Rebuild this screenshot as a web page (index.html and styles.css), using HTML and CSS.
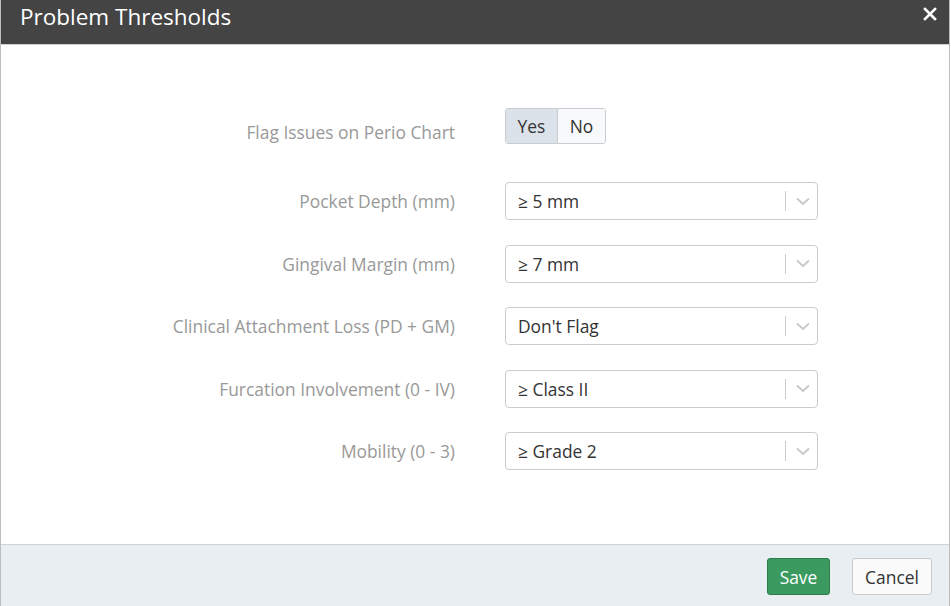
FILE: index.html
```html
<!DOCTYPE html>
<html>
<head>
<meta charset="utf-8">
<link rel="stylesheet" href="styles.css">
</head>
<body>
<div class="modal">
  <div class="modal-header">
    <h1 class="modal-title">Problem Thresholds</h1>
    <button class="close" aria-label="Close">
      <svg width="14" height="14" viewBox="0 0 14 14"><path d="M2 2 L12 12 M12 2 L2 12" stroke="#fff" stroke-width="2.6" stroke-linecap="square"/></svg>
    </button>
  </div>
  <div class="modal-body">
    <div class="row row-toggle">
      <label class="label">Flag Issues on Perio Chart</label>
      <div class="toggle">
        <span class="tbtn active">Yes</span><span class="tbtn">No</span>
      </div>
    </div>
    <div class="row">
      <label class="label">Pocket Depth (mm)</label>
      <div class="select"><span class="value">≥ 5 mm</span><span class="sep"></span><svg class="chev" width="14" height="9" viewBox="0 0 14 9"><path d="M1 1.5 L7 7 L13 1.5" fill="none" stroke="#c8c8c8" stroke-width="1.8"/></svg></div>
    </div>
    <div class="row">
      <label class="label">Gingival Margin (mm)</label>
      <div class="select"><span class="value">≥ 7 mm</span><span class="sep"></span><svg class="chev" width="14" height="9" viewBox="0 0 14 9"><path d="M1 1.5 L7 7 L13 1.5" fill="none" stroke="#c8c8c8" stroke-width="1.8"/></svg></div>
    </div>
    <div class="row">
      <label class="label">Clinical Attachment Loss (PD + GM)</label>
      <div class="select"><span class="value">Don't Flag</span><span class="sep"></span><svg class="chev" width="14" height="9" viewBox="0 0 14 9"><path d="M1 1.5 L7 7 L13 1.5" fill="none" stroke="#c8c8c8" stroke-width="1.8"/></svg></div>
    </div>
    <div class="row">
      <label class="label">Furcation Involvement (0 - IV)</label>
      <div class="select"><span class="value">≥ Class II</span><span class="sep"></span><svg class="chev" width="14" height="9" viewBox="0 0 14 9"><path d="M1 1.5 L7 7 L13 1.5" fill="none" stroke="#c8c8c8" stroke-width="1.8"/></svg></div>
    </div>
    <div class="row">
      <label class="label">Mobility (0 - 3)</label>
      <div class="select"><span class="value">≥ Grade 2</span><span class="sep"></span><svg class="chev" width="14" height="9" viewBox="0 0 14 9"><path d="M1 1.5 L7 7 L13 1.5" fill="none" stroke="#c8c8c8" stroke-width="1.8"/></svg></div>
    </div>
  </div>
  <div class="modal-footer">
    <button class="btn btn-save">Save</button>
    <button class="btn btn-cancel">Cancel</button>
  </div>
</div>
</body>
</html>
```

FILE: styles.css
```css
html, body {
  margin: 0;
  padding: 0;
  background: #fff;
  font-family: "Open Sans", "Liberation Sans", sans-serif;
}
.modal {
  width: 950px;
  height: 606px;
  box-sizing: border-box;
  border-left: 1px solid #bdbdbd;
  border-right: 1px solid #bdbdbd;
  display: flex;
  flex-direction: column;
}
.modal-header {
  height: 45px;
  box-sizing: border-box;
  flex: none;
  background: #444444;
  border-bottom: 1px solid #d0d0d0;
  display: flex;
  align-items: center;
  justify-content: space-between;
  padding: 0 12px 0 19px;
}
.modal-title {
  margin: 0;
  color: #fff;
  font-size: 22.5px;
  font-weight: 400;
  line-height: 1;
  margin-top: -9px;
}
.close {
  background: none;
  border: none;
  padding: 0;
  margin-top: -16px;
  display: flex;
}
.modal-body {
  flex: 1;
  padding-top: 63px;
  display: flex;
  flex-direction: column;
  gap: 24.5px;
}
.row {
  display: flex;
  align-items: center;
  height: 38px;
}
.row-toggle {
  height: 36px;
  margin-bottom: 13.5px;
}
.row-toggle .label {
  padding-top: 12px;
}
.label {
  width: 454px;
  text-align: right;
  color: #999;
  font-size: 17.4px;
  margin-right: 50px;
}
.toggle {
  display: flex;
  height: 36px;
  border: 1px solid #c9cdd1;
  border-radius: 3px;
  box-sizing: border-box;
  overflow: hidden;
}
.tbtn {
  display: flex;
  align-items: center;
  justify-content: center;
  font-size: 17.4px;
  color: #333;
  background: #f7f9fb;
  width: 47px;
}
.tbtn.active {
  background: #dbe2e9;
  border-right: 1px solid #c9cdd1;
  width: 51px;
}
.select {
  width: 313px;
  height: 38px;
  box-sizing: border-box;
  border: 1px solid #ccc;
  border-radius: 4px;
  display: flex;
  align-items: center;
  padding-left: 12px;
  padding-right: 7px;
}
.value {
  flex: 1;
  font-size: 17.4px;
  color: #333;
}
.sep {
  width: 1px;
  height: 20px;
  background: #ccc;
  margin-right: 10px;
}
.chev {
  display: block;
}
.modal-footer {
  height: 62px;
  flex: none;
  box-sizing: border-box;
  background: #e9eef2;
  border-top: 1px solid #cfd3d6;
  display: flex;
  justify-content: flex-end;
  align-items: flex-start;
  padding: 13px 17px 0 0;
  gap: 22px;
}
.btn {
  height: 37px;
  font-family: "Open Sans", "Liberation Sans", sans-serif;
  font-size: 17.4px;
  border-radius: 3px;
  padding: 0 8px;
  box-sizing: border-box;
}
.btn-save {
  width: 63px;
  background: #3a9a60;
  border: 1px solid #2d7d4b;
  color: #fff;
}
.btn-cancel {
  width: 80px;
  background: #fafafa;
  border: 1px solid #ccc;
  color: #333;
}
```
